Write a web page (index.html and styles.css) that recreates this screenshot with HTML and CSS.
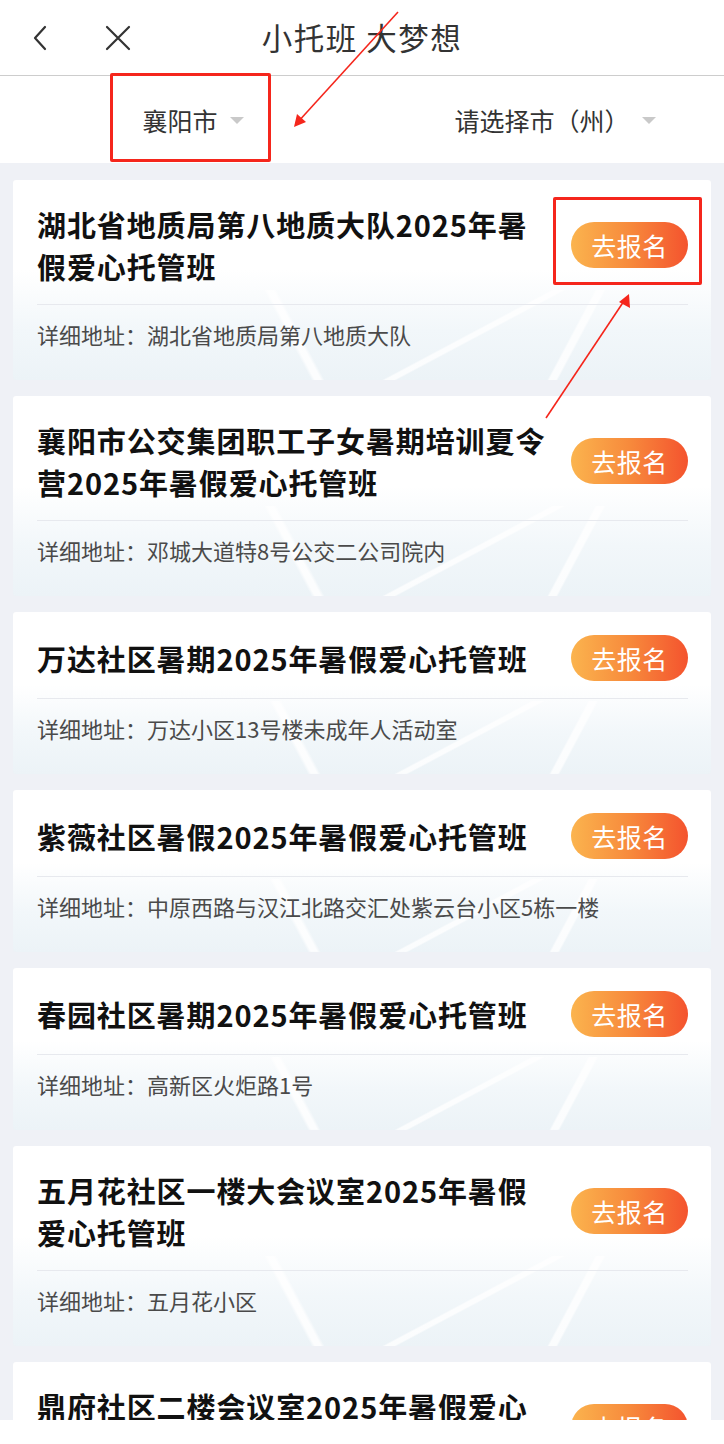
FILE: index.html
```html
<!DOCTYPE html>
<html lang="zh-CN">
<head>
<meta charset="utf-8">
<title>小托班 大梦想</title>
<link rel="stylesheet" href="styles.css">
</head>
<body>
<div class="page">
  <header class="topbar">
    <div class="nav-icons">
      <svg class="icon-back" width="20" height="28" viewBox="0 0 20 28"><path d="M15 3 L5 14 L15 25" fill="none" stroke="#333" stroke-width="2.2" stroke-linecap="round" stroke-linejoin="round"/></svg>
      <svg class="icon-close" width="28" height="28" viewBox="0 0 28 28"><path d="M3 3 L25 25 M25 3 L3 25" fill="none" stroke="#333" stroke-width="2.2" stroke-linecap="round"/></svg>
    </div>
    <h1 class="title">小托班 大梦想</h1>
    <div></div>
  </header>

  <div class="filters">
    <div class="filter"><span>襄阳市</span><i class="caret"></i></div>
    <div class="filter"><span>请选择市（州）</span><i class="caret"></i></div>
  </div>

  <main class="list">
    <section class="card">
      <div class="card-top">
        <h2 class="card-title">湖北省地质局第八地质大队2025年暑假爱心托管班</h2>
        <button class="btn">去报名</button>
      </div>
      <div class="divider"></div>
      <p class="addr">详细地址：湖北省地质局第八地质大队</p>
    </section>
    <section class="card">
      <div class="card-top">
        <h2 class="card-title">襄阳市公交集团职工子女暑期培训夏令营2025年暑假爱心托管班</h2>
        <button class="btn">去报名</button>
      </div>
      <div class="divider"></div>
      <p class="addr">详细地址：邓城大道特8号公交二公司院内</p>
    </section>
    <section class="card">
      <div class="card-top">
        <h2 class="card-title">万达社区暑期2025年暑假爱心托管班</h2>
        <button class="btn">去报名</button>
      </div>
      <div class="divider"></div>
      <p class="addr">详细地址：万达小区13号楼未成年人活动室</p>
    </section>
    <section class="card">
      <div class="card-top">
        <h2 class="card-title">紫薇社区暑假2025年暑假爱心托管班</h2>
        <button class="btn">去报名</button>
      </div>
      <div class="divider"></div>
      <p class="addr">详细地址：中原西路与汉江北路交汇处紫云台小区5栋一楼</p>
    </section>
    <section class="card">
      <div class="card-top">
        <h2 class="card-title">春园社区暑期2025年暑假爱心托管班</h2>
        <button class="btn">去报名</button>
      </div>
      <div class="divider"></div>
      <p class="addr">详细地址：高新区火炬路1号</p>
    </section>
    <section class="card">
      <div class="card-top">
        <h2 class="card-title">五月花社区一楼大会议室2025年暑假爱心托管班</h2>
        <button class="btn">去报名</button>
      </div>
      <div class="divider"></div>
      <p class="addr">详细地址：五月花小区</p>
    </section>
    <section class="card">
      <div class="card-top">
        <h2 class="card-title">鼎府社区二楼会议室2025年暑假爱心托管班</h2>
        <button class="btn">去报名</button>
      </div>
      <div class="divider"></div>
      <p class="addr">详细地址：鼎府社区</p>
    </section>
  </main>

  <div class="mark mark-city"></div>
  <div class="mark mark-btn"></div>
  <svg class="arrows" width="724" height="1444" viewBox="0 0 724 1444">
    <line x1="398" y1="12" x2="297" y2="123" stroke="#f5261c" stroke-width="1.6"/>
    <path d="M294 127 L297 114 L306 122 Z" fill="#f5261c"/>
    <line x1="546" y1="418" x2="626" y2="298" stroke="#f5261c" stroke-width="1.6"/>
    <path d="M629 294 L619 302 L630 308 Z" fill="#f5261c"/>
  </svg>
  <div class="bottom-cover"></div>
</div>
</body>
</html>
```

FILE: styles.css
```css
* { box-sizing: border-box; }
html, body { margin: 0; padding: 0; }
body {
  font-family: "Noto Sans CJK SC", "Noto Sans", sans-serif;
  background: #eff1f6;
  color: #333;
  width: 724px;
  height: 1444px;
  overflow: hidden;
}
.page { position: relative; width: 724px; min-height: 1444px; }

.topbar {
  height: 76px;
  background: #fff;
  border-bottom: 1px solid #cdcdcd;
  display: grid;
  grid-template-columns: 1fr auto 1fr;
  align-items: center;
}
.nav-icons {
  display: flex;
  align-items: center;
  gap: 54px;
  padding-left: 30px;
}
.title {
  margin: 0;
  font-size: 30.5px;
  font-weight: 400;
  color: #333;
  letter-spacing: 1.5px;
  line-height: 1;
}

.filters {
  height: 87px;
  background: #fff;
  display: grid;
  grid-template-columns: 1fr 1fr;
}
.filter {
  display: flex;
  align-items: center;
  justify-content: center;
  padding-left: 24px;
  gap: 12px;
  font-size: 25px;
  color: #333;
}
.caret {
  width: 0; height: 0;
  border-left: 7px solid transparent;
  border-right: 7px solid transparent;
  border-top: 7px solid #c9c9c9;
  margin-top: 2px;
}

.list {
  padding: 17px 13px 0;
  display: flex;
  flex-direction: column;
  gap: 16px;
}
.card {
  padding: 23px 23px 31px 24px;
  border-radius: 3px;
  background-color: #fff;
  background-image:
    linear-gradient(62deg, transparent 40%, rgba(255,255,255,0.85) 40.5%, rgba(255,255,255,0.85) 41.3%, transparent 41.8%),
    linear-gradient(152deg, transparent 62%, rgba(255,255,255,0.8) 62.4%, rgba(255,255,255,0.8) 63.4%, transparent 63.8%),
    linear-gradient(118deg, transparent 78%, rgba(255,255,255,0.8) 78.3%, rgba(255,255,255,0.8) 79.2%, transparent 79.5%),
    linear-gradient(180deg, #ffffff 0%, #ffffff 45%, #f2f7fa 75%, #ecf3f7 100%);
  background-size: 100% 45%, 100% 45%, 100% 45%, 100% 100%;
  background-position: left bottom, left bottom, left bottom, left top;
  background-repeat: no-repeat;
}
.card-top {
  display: flex;
  align-items: center;
  gap: 20px;
}
.card-title {
  flex: 1;
  margin: 0;
  font-size: 29px;
  font-weight: 700;
  line-height: 42px;
  color: #111;
  letter-spacing: 0.9px;
}
.btn {
  flex-shrink: 0;
  width: 117px;
  height: 46px;
  border: 0;
  border-radius: 23px;
  background: linear-gradient(90deg, #fbb44e 0%, #f78a3c 50%, #f4532e 100%);
  color: #fff;
  font-family: "Noto Sans CJK SC", sans-serif;
  font-size: 25px;
  letter-spacing: 0.5px;
  padding: 0;
  line-height: 46px;
}
.divider {
  margin-top: 17px;
  height: 1px;
  background: #e7e9ee;
}
.addr {
  margin: 14px 0 0;
  font-size: 22px;
  line-height: 30px;
  color: #4a4a4a;
}

.mark {
  position: absolute;
  border: 3px solid #f5261c;
  border-radius: 2px;
}
.mark-city { left: 110px; top: 73px; width: 161px; height: 89px; }
.mark-btn { left: 553px; top: 197px; width: 149px; height: 88px; }
.arrows { position: absolute; left: 0; top: 0; pointer-events: none; }
.bottom-cover {
  position: absolute;
  left: 0; top: 1420px;
  width: 724px; height: 24px;
  background: #fff;
}
```
